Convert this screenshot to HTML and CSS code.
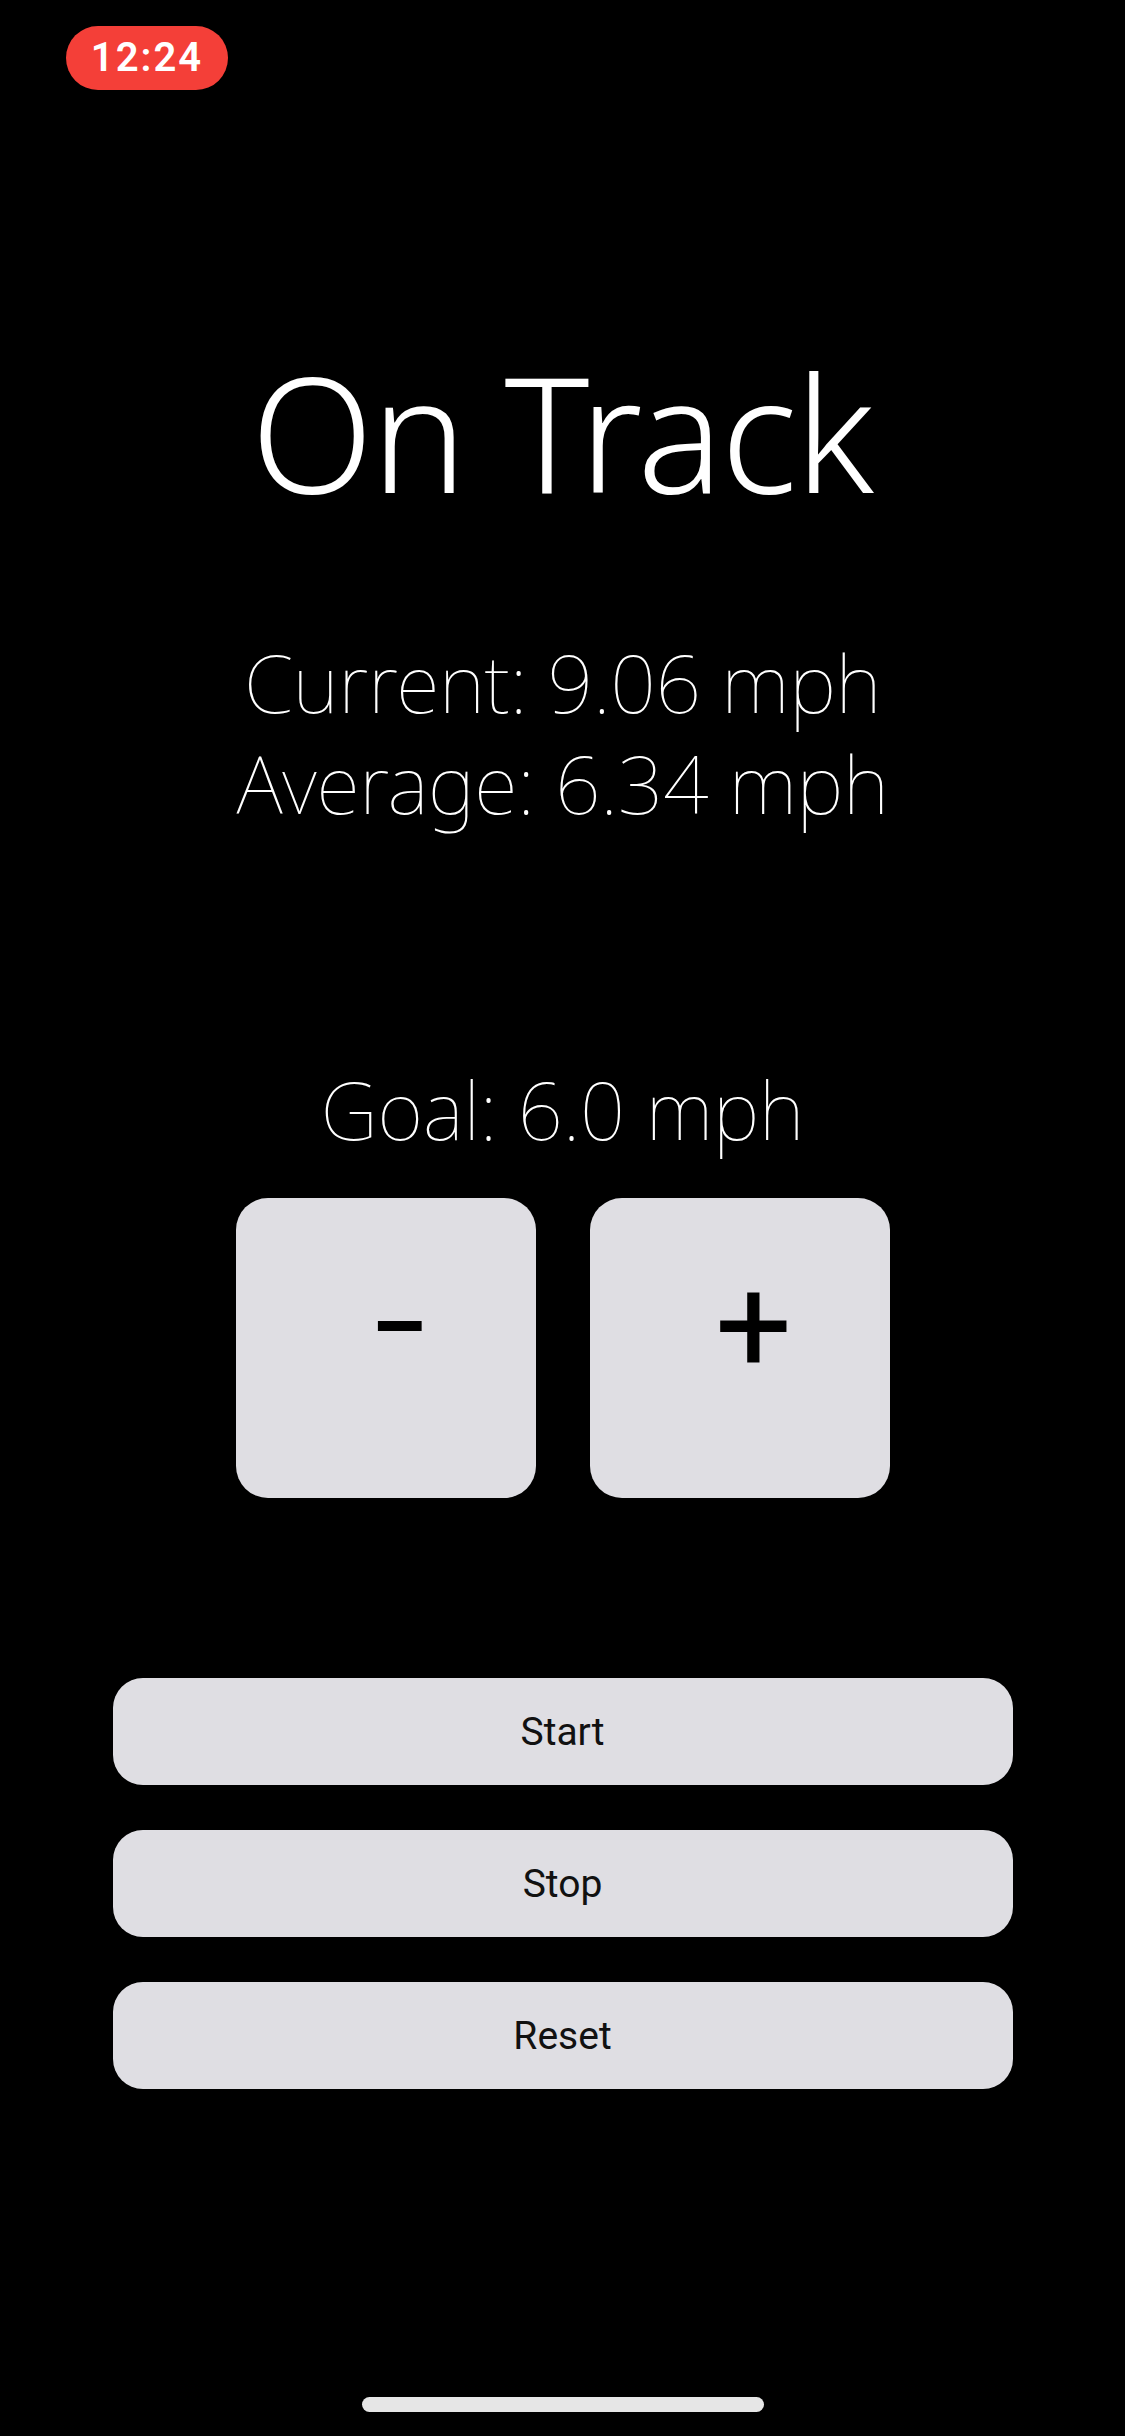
FILE: index.html
```html
<!DOCTYPE html>
<html lang="en">
<head>
<meta charset="utf-8">
<title>On Track</title>
<link rel="stylesheet" href="styles.css">
</head>
<body>
<div class="screen">
  <header class="status-bar">
    <span class="time-pill">12:24</span>
  </header>
  <main class="content">
    <h1 class="title">On Track</h1>
    <div class="stats">
      <p class="stat">Current: 9.06 mph</p>
      <p class="stat">Average: 6.34 mph</p>
    </div>
    <p class="goal">Goal: 6.0 mph</p>
    <div class="stepper">
      <button class="step-btn"><span class="step-glyph minus">-</span></button>
      <button class="step-btn"><span class="step-glyph plus">+</span></button>
    </div>
    <div class="actions">
      <button class="action-btn">Start</button>
      <button class="action-btn">Stop</button>
      <button class="action-btn">Reset</button>
    </div>
  </main>
  <div class="home-indicator"></div>
</div>
</body>
</html>
```
FILE: styles.css
```css
html, body {
  margin: 0;
  padding: 0;
  background: #000;
}
.screen {
  width: 1125px;
  height: 2436px;
  display: flex;
  flex-direction: column;
  background: #000;
  color: #fff;
  overflow: hidden;
}
.status-bar {
  display: flex;
  padding: 26px 0 0 66px;
  height: 64px;
}
.time-pill {
  width: 162px;
  height: 64px;
  border-radius: 32px;
  background: #f43f38;
  color: #fff;
  font-family: Roboto, "Liberation Sans", sans-serif;
  font-weight: 600;
  font-size: 40px;
  letter-spacing: 2px;
  line-height: 64px;
  text-align: center;
}
.content {
  display: flex;
  flex-direction: column;
  align-items: center;
}
.title {
  margin: 261px 0 0;
  font-family: "Noto Sans", "Open Sans", sans-serif;
  font-weight: 300;
  font-size: 160px;
  line-height: 160px;
  letter-spacing: -2px;
  text-indent: -2px;
  text-align: center;
}
.stats {
  margin-top: 120px;
  display: flex;
  flex-direction: column;
  align-items: center;
}
.stat {
  margin: 0;
  font-family: "Noto Sans", "Open Sans", sans-serif;
  font-weight: 100;
  font-size: 80px;
  line-height: 101px;
  letter-spacing: -0.3px;
}
.goal {
  margin: 226px 0 0;
  font-family: "Noto Sans", "Open Sans", sans-serif;
  font-weight: 100;
  font-size: 79px;
  line-height: 101px;
}
.stepper {
  margin-top: 38px;
  display: flex;
  gap: 54px;
}
.step-btn {
  width: 300px;
  height: 300px;
  border: none;
  border-radius: 32px;
  background: #dfdee3;
  color: #000;
  padding: 0;
  display: flex;
  justify-content: center;
  align-items: flex-start;
  font-family: Roboto, "Liberation Sans", sans-serif;
  font-size: 136px;
  line-height: 136px;
}
.step-glyph {
  display: inline-block;
  margin-top: 60px;
  margin-left: 28px;
}
.step-glyph.minus {
  transform: translateY(-5px) scaleX(1.35);
}
.actions {
  margin-top: 180px;
  display: flex;
  flex-direction: column;
  gap: 45px;
}
.action-btn {
  width: 900px;
  height: 107px;
  border: none;
  border-radius: 30px;
  background: #dfdee3;
  color: #111;
  font-family: Roboto, "Liberation Sans", sans-serif;
  font-size: 39px;
  padding: 0;
}
.home-indicator {
  margin: auto auto 24px;
  width: 402px;
  height: 15px;
  border-radius: 8px;
  background: #e6e6e6;
}
```
